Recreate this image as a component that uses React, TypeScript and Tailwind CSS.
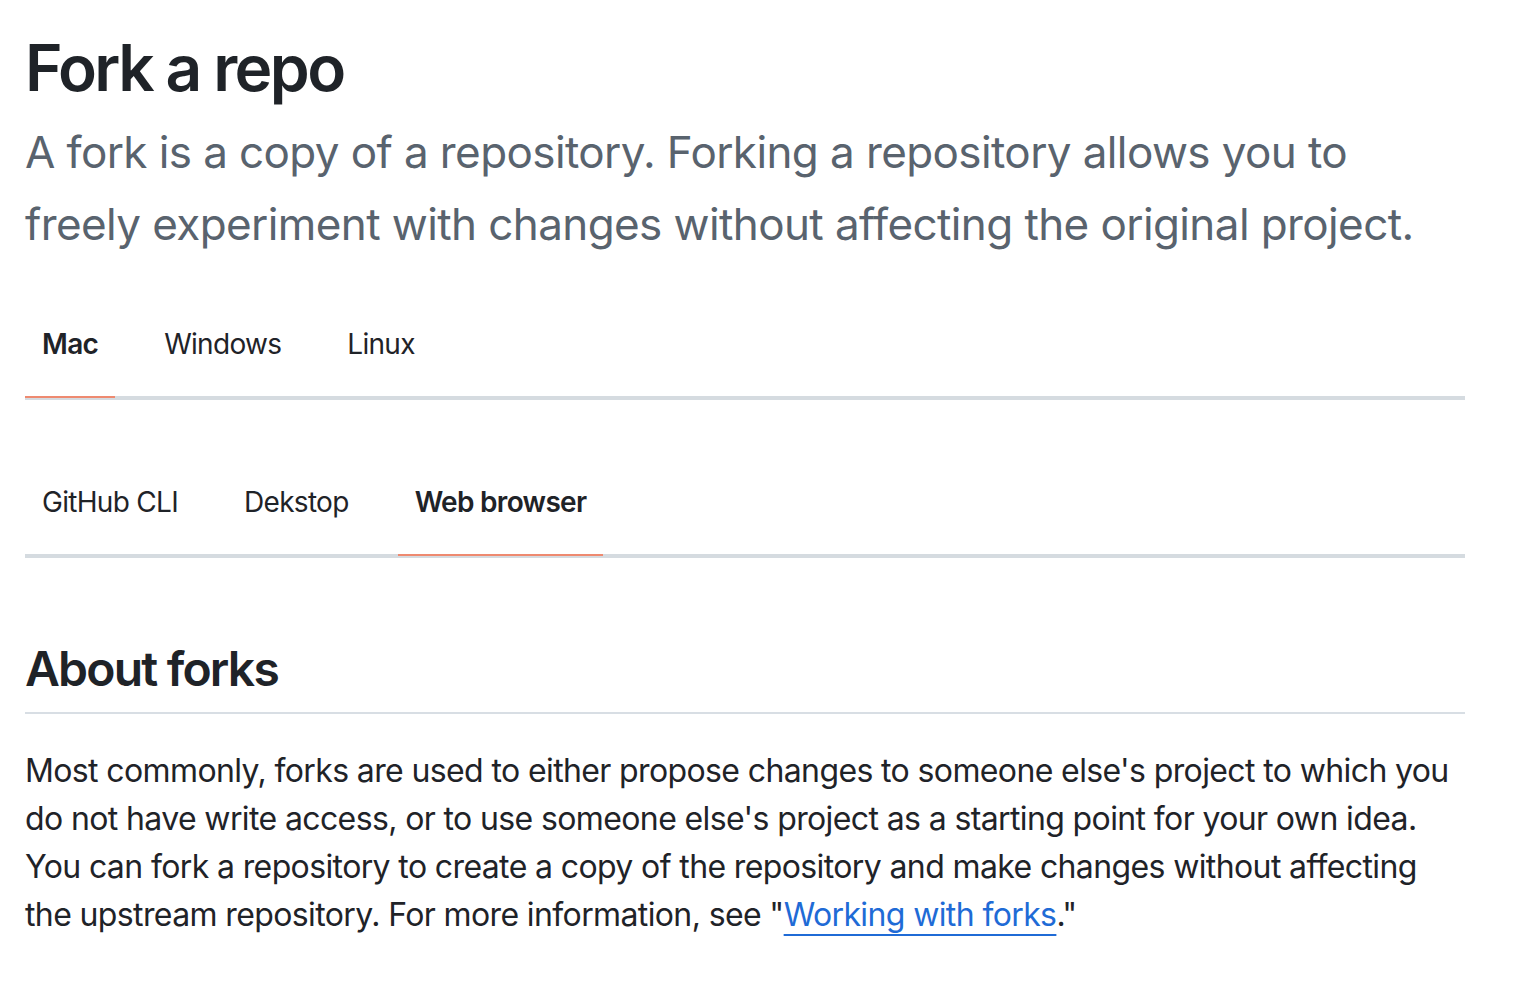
import React from "react";

const font = { fontFamily: "Inter, 'Noto Sans', sans-serif" };

function Tabs({ items, active }: { items: string[]; active: number }) {
  return (
    <div className="flex gap-[32px] border-b-4 border-[#d5dbe0]">
      {items.map((t, i) => (
        <div
          key={t}
          className={`relative px-[17px] py-[32px] text-[28px] leading-[40px] tracking-[-0.7px] text-[#1f2328] ${
            i === active ? "font-semibold" : "font-normal"
          }`}
        >
          {t}
          {i === active && (
            <span className="absolute left-0 right-0 top-full h-[2px] bg-[#ee8a70]" />
          )}
        </div>
      ))}
    </div>
  );
}

export default function App() {
  return (
    <div className="min-h-screen bg-white" style={font}>
      <div className="w-[1440px] ml-[25px] pt-[28px]">
        <h1 className="text-[64px] leading-[80px] font-semibold text-[#1f2328] tracking-[-2.6px]">
          Fork a repo
        </h1>
        <p className="mt-[8px] text-[44px] leading-[72px] text-[#59636e] tracking-[-0.6px]">
          A fork is a copy of a repository. Forking a repository allows you to
          <br />
          freely experiment with changes without affecting the original project.
        </p>
        <div className="mt-[32px]">
          <Tabs items={["Mac", "Windows", "Linux"]} active={0} />
        </div>
        <div className="mt-[50px]">
          <Tabs items={["GitHub CLI", "Dekstop", "Web browser"]} active={2} />
        </div>
        <h2 className="mt-[81px] pb-[13px] border-b-2 border-[#d8dee4] text-[48px] leading-[60px] font-semibold text-[#1f2328] tracking-[-1.8px]">
          About forks
        </h2>
        <p className="mt-[33px] text-[32px] leading-[48px] text-[#1f2328] tracking-[-0.62px]">
          {"Most commonly, forks are used to either propose changes to someone else's project to which you do not have write access, or to use someone else's project as a starting point for your own idea. You can fork a repository to create a copy of the repository and make changes without affecting the upstream repository. For more information, see \""}
          <a className="text-[#1f6bd6] underline underline-offset-[8px] decoration-2">Working with forks</a>
          {".\""}
        </p>
      </div>
    </div>
  );
}
